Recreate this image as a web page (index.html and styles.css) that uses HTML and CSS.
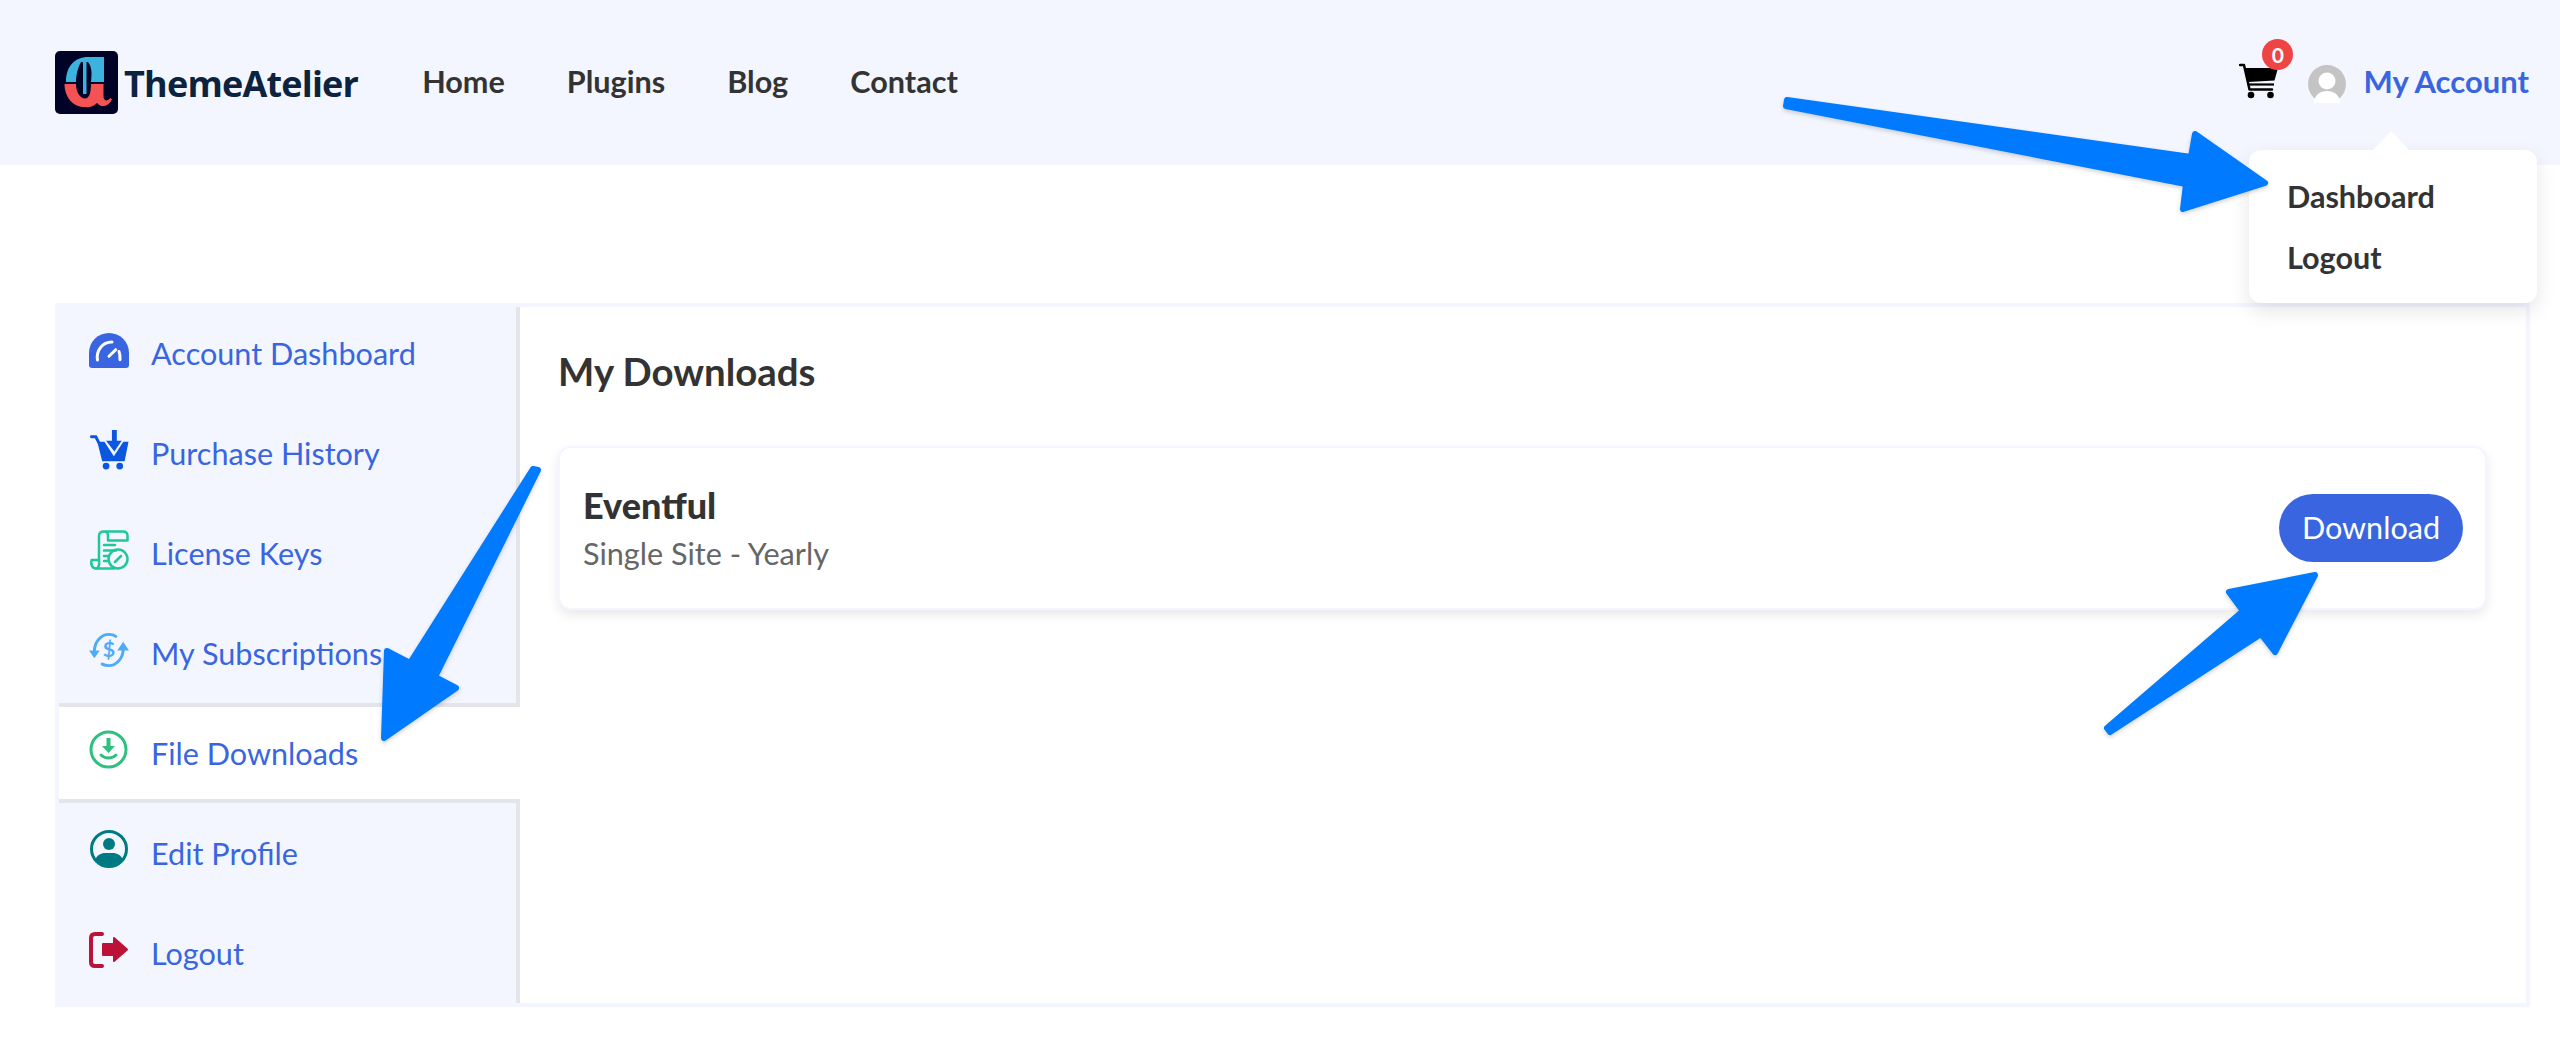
FILE: index.html
```html
<!DOCTYPE html>
<html lang="en">
<head>
<meta charset="utf-8">
<title>My Downloads - ThemeAtelier</title>
<link rel="stylesheet" href="styles.css">
</head>
<body>
<header class="topbar">
  <a class="brand" href="#">
    <svg class="brand-mark" viewBox="0 0 63 63" aria-hidden="true">
      <rect width="63" height="63" rx="5" fill="#000326"/>
      <path fill="#f55353" d="M9.500 33H21C21 41 25 47.500 30 47.500C34 47.500 36 42 36 33H48.500V45C48.500 50 52 51 55.500 47L57 48.500C53 56 46 57 42 52C38 56 34 56.500 29 56C18 56 9.500 46 9.500 33Z"/>
      <path fill="#3cb3df" d="M11 31C11 15 20 6 33 6H49V31H36C37 22 37 16 33 11H26C23 16 21 24 21 31Z"/>
      <rect fill="#3cb3df" x="28" y="10" width="3.500" height="33"/>
    </svg>
    <span class="brand-name">ThemeAtelier</span>
  </a>
  <nav class="main-nav">
    <a href="#">Home</a>
    <a href="#">Plugins</a>
    <a href="#">Blog</a>
    <a href="#">Contact</a>
  </nav>
  <div class="account">
    <a class="cart" href="#">
      <svg class="cart-icon" viewBox="0 0 40 36" aria-hidden="true">
        <path fill="none" stroke="#000" stroke-width="2.500" stroke-linecap="round" stroke-linejoin="round" d="M1 2H5L10.500 26.500H33"/>
        <path d="M6 5H39L35.500 17.500L9 19Z"/>
        <path fill="none" stroke="#000" stroke-width="2.200" d="M9.500 21.500H35"/>
        <circle cx="12" cy="32" r="3.300"/>
        <circle cx="31.500" cy="32" r="3.300"/>
      </svg>
      <span class="cart-count">0</span>
    </a>
    <svg class="avatar" viewBox="0 0 38 38" aria-hidden="true">
      <circle cx="19" cy="19" r="19" fill="#c4c4c4"/>
      <circle cx="19" cy="16" r="8.500" fill="#fff"/>
      <path fill="#fff" d="M6 38C6 30 12 26 19 26S32 30 32 38Z"/>
    </svg>
    <a class="account-link" href="#">My Account</a>
  </div>
  <ul class="account-menu">
    <li><a href="#">Dashboard</a></li>
    <li><a href="#">Logout</a></li>
  </ul>
</header>

<main class="page">
  <section class="panel">
    <ul class="side-nav">
      <li class="side-item">
        <svg class="side-icon" viewBox="0 0 40 40" aria-hidden="true">
          <path fill="#3966e0" d="M3 38Q0 38 0 35V23A20 20 0 0 1 40 23V35Q40 38 37 38Z"/>
          <path fill="none" stroke="#fff" stroke-width="3" stroke-linecap="round" d="M8.500 30C7 21 13 12 23 12M30 21.500C31 24 31.200 27 31 29.700"/>
          <path fill="none" stroke="#fff" stroke-width="3" stroke-linecap="round" d="M20 26.300L26.700 19.700"/>
        </svg>
        <a href="#">Account Dashboard</a>
      </li>
      <li class="side-item">
        <svg class="side-icon" viewBox="0 0 40 41" aria-hidden="true">
          <path fill="none" stroke="#0b57e0" stroke-width="3" stroke-linecap="round" d="M2 7H6.500L9.500 13"/>
          <path fill="#0b57e0" d="M8 12H40L36 32H13Z"/>
          <path fill="#f3f6ff" d="M14 10H36L25 27Z"/>
          <path fill="#0b57e0" d="M23 0H28V11H33L25.500 22L17 11H23Z"/>
          <circle cx="17" cy="37" r="3.500" fill="#0b57e0"/>
          <circle cx="31" cy="37" r="3.500" fill="#0b57e0"/>
        </svg>
        <a href="#">Purchase History</a>
      </li>
      <li class="side-item">
        <svg class="side-icon" viewBox="0 0 40 40" aria-hidden="true">
          <g fill="none" stroke="#1fc89a" stroke-width="2.500" stroke-linecap="round" stroke-linejoin="round">
            <path d="M10 30V6C10 3 12 1.500 15 1.500H34C37 1.500 38.500 3 38.500 6V10.500H19V6C19 3 17 1.500 15 1.500"/>
            <path d="M10 30H2.500C1.500 35 3.500 38.500 7 38.500H25"/>
            <path d="M7 38.500C10 38 10.500 34 10 30"/>
            <path d="M15 15H26M15 20.500H27M15 26H20M15 31H20"/>
            <circle cx="29" cy="29" r="9.500"/>
            <path d="M26 32L32 26"/>
          </g>
        </svg>
        <a href="#">License Keys</a>
      </li>
      <li class="side-item">
        <svg class="side-icon" viewBox="0 0 41 35" aria-hidden="true">
          <g fill="none" stroke="#4dabf7" stroke-width="3" stroke-linecap="round">
            <path d="M5.500 19C5.500 9 12.500 1.500 20.500 1.500C23 1.500 25.500 2 27.500 3.500"/>
            <path d="M35 17C35 26 28 33.500 20.500 33.500C18 33.500 15.500 33 13.500 32"/>
          </g>
          <path fill="#4dabf7" d="M0 18H11L5.500 26Z"/>
          <path fill="#4dabf7" d="M29 18H41L35 9Z"/>
          <text class="dollar" x="20.500" y="25" text-anchor="middle">$</text>
        </svg>
        <a href="#">My Subscriptions</a>
      </li>
      <li class="side-item is-active">
        <svg class="side-icon" viewBox="0 0 40 40" aria-hidden="true">
          <circle cx="19.500" cy="19.500" r="17.500" fill="none" stroke="#2fbf7f" stroke-width="3"/>
          <path fill="#2fbf7f" d="M17.500 8H21.500V16H26L19.500 23L13 16H17.500Z"/>
          <path fill="none" stroke="#2fbf7f" stroke-width="3" stroke-linecap="round" d="M12 25C16 29 23 29 27 25"/>
        </svg>
        <a href="#">File Downloads</a>
      </li>
      <li class="side-item">
        <svg class="side-icon" viewBox="0 0 40 40" aria-hidden="true">
          <circle cx="20" cy="19" r="17.500" fill="#f3f6ff" stroke="#007a82" stroke-width="3"/>
          <circle cx="20" cy="14" r="6" fill="#007a82"/>
          <path fill="#007a82" d="M6 30C8 25 12 23 16 23H24C28 23 32 25 34 30C30 35 25 37 20 37S10 35 6 30Z"/>
        </svg>
        <a href="#">Edit Profile</a>
      </li>
      <li class="side-item">
        <svg class="side-icon" viewBox="0 0 40 36" aria-hidden="true">
          <path fill="none" stroke="#bd1237" stroke-width="4" stroke-linecap="round" stroke-linejoin="round" d="M13 2H6C3.500 2 2 3.500 2 6V30C2 32.500 3.500 34 6 34H13"/>
          <path fill="#bd1237" stroke="#bd1237" stroke-width="2" stroke-linejoin="round" d="M14 12H25V6L38 17.500L25 29V23H14Z"/>
        </svg>
        <a href="#">Logout</a>
      </li>
    </ul>
    <div class="content">
      <h1>My Downloads</h1>
      <article class="download-card">
        <div class="download-info">
          <h2>Eventful</h2>
          <p>Single Site - Yearly</p>
        </div>
        <a class="download-btn" href="#">Download</a>
      </article>
    </div>
  </section>
</main>

<svg class="annotations" viewBox="0 0 2560 1049" aria-hidden="true">
  <g>
    <path d="M1787 100L2191 157L2195 134L2265 183L2183 209L2186 184L1786 106Z"/>
    <path d="M538 470L435 677L456 688L384 738L387 651L410 663L533 469Z"/>
    <path d="M2243 611L2229 592L2315 575L2275 652L2261 634L2110 732L2107 728Z"/>
  </g>
</svg>
</body>
</html>
```
FILE: styles.css
```css
* { box-sizing: border-box; }
html, body { margin: 0; padding: 0; }
body {
  position: relative;
  min-height: 1049px;
  overflow: hidden;
  background: #fff;
  color: #333;
  font-family: Lato, "Liberation Sans", sans-serif;
  font-size: 30.600px;
}
a { color: inherit; text-decoration: none; }
ul { list-style: none; margin: 0; padding: 0; }

.topbar {
  position: relative;
  display: flex;
  align-items: center;
  height: 165px;
  padding: 0 31px 0 55px;
  background: #f3f6ff;
}
.brand { display: flex; align-items: center; gap: 6px; }
.brand-mark { display: block; width: 63px; height: 63px; flex: none; }
.brand-name {
  font-family: "Open Sans", sans-serif;
  font-weight: 700;
  font-size: 36px;
  letter-spacing: -0.8px;
  color: #0c2340;
  margin-top: 2px;
}
.main-nav {
  display: flex;
  gap: 62px;
  margin: -3px 0 0 64px;
  font-weight: 700;
  color: #333;
}
.account { display: flex; align-items: center; margin-left: auto; }
.cart { position: relative; display: block; width: 40px; height: 36px; margin-right: 29px; }
.cart-icon { display: block; width: 40px; height: 36px; margin-top: -2px; }
.cart-count {
  position: absolute;
  left: 23px;
  top: -26px;
  width: 31px;
  height: 31px;
  border-radius: 50%;
  background: #ef4444;
  color: #fff;
  font-size: 21px;
  font-weight: 700;
  line-height: 31px;
  text-align: center;
}
.avatar { display: block; width: 38px; height: 38px; margin: 3px 17px 0 0; }
.account-link { color: #3966e0; font-size: 31px; font-weight: 700; margin-top: -3px; }

.account-menu {
  position: absolute;
  left: 2249px;
  top: 150px;
  z-index: 2;
  width: 288px;
  height: 153px;
  padding: 16px 38px;
  background: #fff;
  border-radius: 12px;
  box-shadow: 0 8px 20px rgba(0, 0, 0, 0.1);
  font-weight: 700;
}
.account-menu::before {
  content: "";
  position: absolute;
  left: 123px;
  top: -19px;
  border-left: 19px solid transparent;
  border-right: 19px solid transparent;
  border-bottom: 20px solid #fff;
}
.account-menu li { height: 61px; line-height: 61px; }

.page { padding: 138px 30px 0 55px; }
.panel {
  display: flex;
  height: 704px;
  border: 4px solid #f3f6ff;
}
.side-nav { width: 461px; flex: none; background: #f3f6ff; }
.side-item {
  display: flex;
  align-items: center;
  gap: 22px;
  height: 100px;
  padding-left: 30px;
  border-right: 4px solid #e4e5ea;
  color: #3966e0;
}
.side-item:first-child { height: 96px; padding-bottom: 4px; }
.side-item.is-active {
  position: relative;
  background: #fff;
  border-top: 4px solid #e4e5ea;
  border-bottom: 4px solid #e4e5ea;
  border-right: 0;
}
.side-icon { display: block; width: 40px; height: 40px; flex: none; margin-top: -6px; }
.dollar { font: 700 22px Lato, sans-serif; fill: #4dabf7; }

.content { flex: 1; padding: 42px 39px 0 38px; }
.content h1 {
  margin: 0 0 53px;
  font-size: 38.400px;
  line-height: 44px;
  font-weight: 700;
  color: #333;
}
.download-card {
  display: flex;
  align-items: center;
  justify-content: space-between;
  height: 164px;
  padding: 0 22px 0 23px;
  background: #fff;
  border: 2px solid #f3f6ff;
  border-radius: 13px;
  box-shadow: 0 5px 12px rgba(0, 0, 0, 0.09);
}
.download-info h2 {
  margin: 0;
  font-size: 36px;
  line-height: 48px;
  font-weight: 900;
  color: #333;
}
.download-info p { margin: 3px 0 0; line-height: 44px; color: #666; }
.download-btn {
  display: block;
  width: 184px;
  height: 68px;
  border-radius: 34px;
  background: #3966e0;
  color: #fff;
  line-height: 68px;
  text-align: center;
}

.annotations {
  position: absolute;
  left: 0;
  top: 0;
  z-index: 5;
  width: 2560px;
  height: 1049px;
  pointer-events: none;
  filter: drop-shadow(0 2px 2px rgba(0, 0, 0, 0.18));
}
.annotations path {
  fill: #007aff;
  stroke: #007aff;
  stroke-width: 6px;
  stroke-linejoin: round;
}
```
